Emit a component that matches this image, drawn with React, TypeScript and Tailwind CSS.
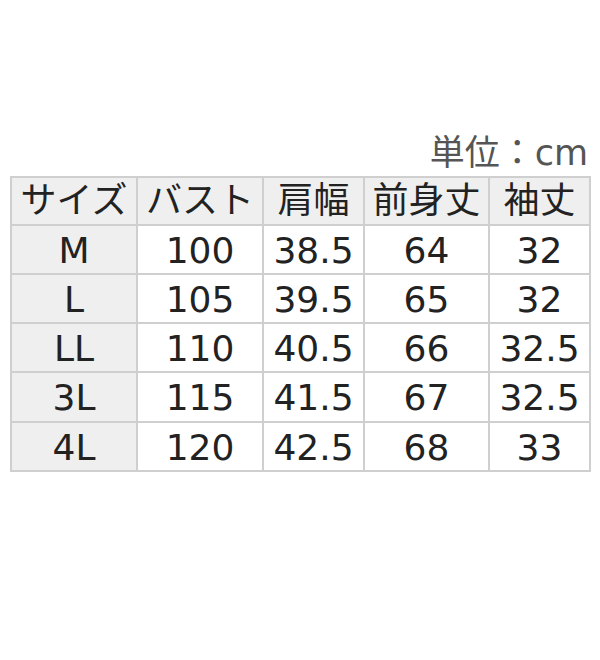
import React from "react";

const rows = [
  ["M", "100", "38.5", "64", "32"],
  ["L", "105", "39.5", "65", "32"],
  ["LL", "110", "40.5", "66", "32.5"],
  ["3L", "115", "41.5", "67", "32.5"],
  ["4L", "120", "42.5", "68", "33"],
];
const head = ["サイズ", "バスト", "肩幅", "前身丈", "袖丈"];

export default function App() {
  return (
    <div
      className="w-[600px] h-[660px] bg-white flex flex-col"
      style={{ fontFamily: '"DejaVu Sans", "Noto Sans CJK JP", sans-serif' }}
    >
      <div className="mt-[130px] h-[46px] pr-[12px] flex justify-end items-center text-[35px] leading-none text-[#555]">
        単位：cm
      </div>
      <div className="ml-[10px] w-[581px] grid grid-cols-[124px_124px_99px_123px_99px] grid-rows-[46px_47px_47px_47px_48px_47px] gap-[2px] p-[2px] bg-[#cfcfcf] text-[36px] leading-none text-[#222]">
        {head.map((h) => (
          <div key={h} className="bg-[#efefef] flex items-center justify-center">
            {h}
          </div>
        ))}
        {rows.map((r) =>
          r.map((c, i) => (
            <div
              key={r[0] + i}
              className={
                (i === 0 ? "bg-[#efefef]" : "bg-white") +
                " flex items-center justify-center pt-[2px]"
              }
            >
              {c}
            </div>
          ))
        )}
      </div>
    </div>
  );
}
